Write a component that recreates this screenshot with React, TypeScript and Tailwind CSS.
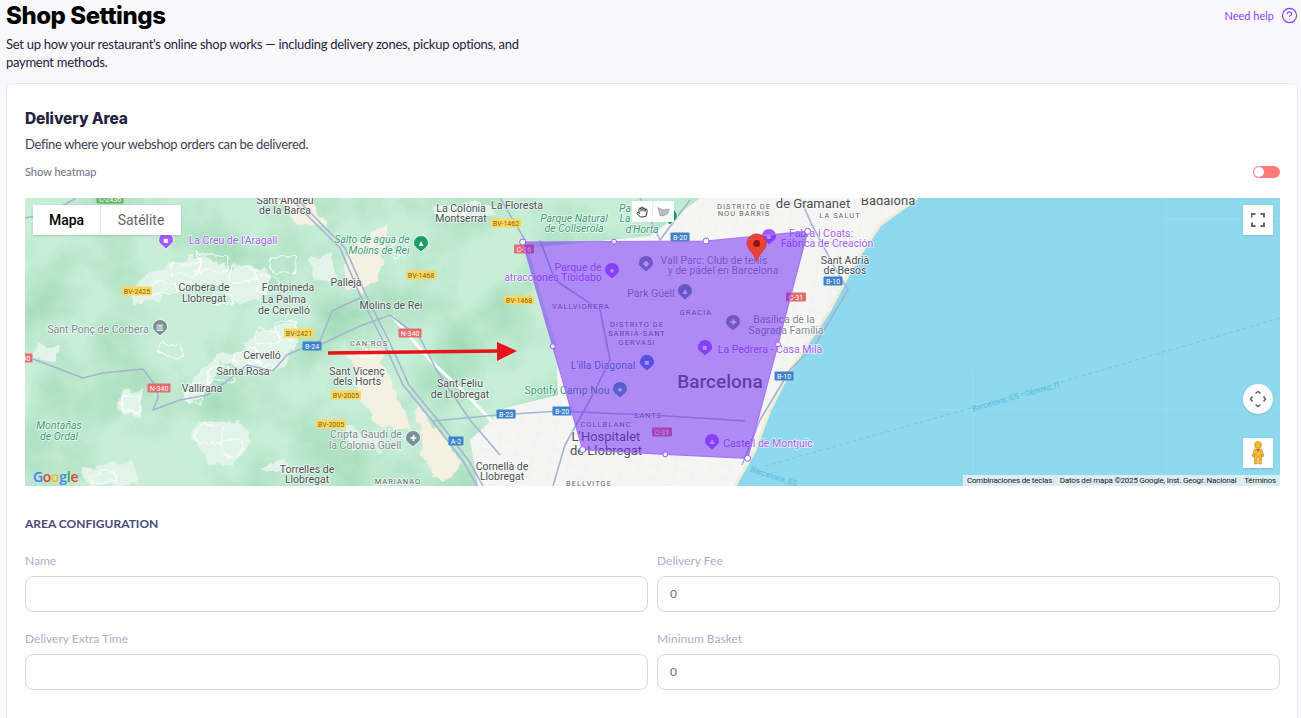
import { CircleHelp, Hand } from "lucide-react";

type L = [string, number, number];

const dark: L[] = [
  ["La Colònia", 461, 208], ["Montserrat", 461, 218], ["Sant Andreu", 285, 200], ["de la Barca", 285, 210],
  ["Corbera de", 204, 287], ["Llobregat", 204, 298], ["Fontpineda", 288, 287], ["La Palma", 284, 299],
  ["de Cervelló", 284, 310], ["Pallejà", 346, 282], ["Molins de Rei", 391, 305], ["Cervelló", 262, 355],
  ["Santa Rosa", 243, 371], ["Vallirana", 202, 388], ["Sant Vicenç", 357, 371], ["dels Horts", 357, 381],
  ["Sant Feliu", 460, 383], ["de Llobregat", 460, 394], ["Torrelles de", 307, 469], ["Llobregat", 307, 479],
  ["Cornellà de", 502, 466], ["Llobregat", 502, 476], ["La Floresta", 517, 205], ["Sant Adrià", 845, 260],
  ["de Besòs", 845, 270],
];
const small: L[] = [
  ["CAN ROS", 369, 343], ["MARIANAO", 398, 481], ["DISTRITO DE", 744, 206], ["NOU BARRIS", 744, 213],
  ["LA SALUT", 840, 215], ["VALLVIDRERA", 581, 306], ["GRACIA", 696, 312], ["DISTRITO DE", 637, 324],
  ["SARRIÀ-SANT", 637, 333], ["GERVASI", 637, 342], ["SANTS", 648, 415], ["COLLBLANC", 606, 424], ["BELLVITGE", 589, 483],
];
const grey: L[] = [
  ["Sant Ponç de Corbera", 98, 329], ["Cripta Gaudí de", 366, 434], ["la Colonia Güell", 365, 445],
  ["Park Güell", 651, 293], ["Vall Parc: Club de tenis", 714, 260], ["y de pádel en Barcelona", 723, 270],
  ["Basílica de la", 784, 319], ["Sagrada Família", 786, 330],
];
const purple: L[] = [
  ["La Creu de l'Aragall", 233, 240], ["Fabra i Coats:", 821, 233], ["Fábrica de Creación", 827, 243],
  ["Parque de", 578, 267], ["atracciones Tibidabo", 553, 277], ["La Pedrera - Casa Milà", 770, 349],
  ["Castell de Montjuïc", 768, 443],
];
const green: L[] = [
  ["Salto de agua de", 372, 239], ["Molins de Rei", 379, 250], ["Montañas", 59, 425], ["de Ordal", 59, 436],
  ["Parque Natural", 574, 218], ["de Collserola", 574, 228], ["d'Horta", 642, 229], ["Pa", 625, 208], ["La", 625, 218],
];
const shields: [string, number, number, string, number][] = [
  ["BV-2425", 137, 291, "#fcd75e", 30], ["BV-2421", 299, 333, "#fcd75e", 30], ["BV-1468", 421, 275, "#fcd75e", 30],
  ["BV-2005", 346, 395, "#fcd75e", 30], ["BV-2005", 331, 424, "#fcd75e", 30], ["BV-1462", 506, 223, "#fcd75e", 30],
  ["BV-1468", 519, 300, "#fcd75e", 30], ["C-2436", 110, 199, "#6bb36b", 27], ["N-340", 410, 333, "#e56b6f", 23],
  ["N-340", 159, 388, "#e56b6f", 23], ["N-340", 21, 358, "#e56b6f", 23], ["C-16", 524, 249, "#e56b6f", 20], ["C-31", 796, 297, "#e56b6f", 20],
  ["C-31", 662, 432, "#e56b6f", 20], ["B-24", 312, 346, "#3f82cc", 19], ["A-2", 456, 441, "#3f82cc", 15],
  ["B-20", 680, 237, "#3f82cc", 19], ["B-10", 833, 281, "#3f82cc", 19], ["B-10", 784, 376, "#3f82cc", 19],
  ["B-23", 506, 414, "#3f82cc", 19], ["B-20", 562, 411, "#3f82cc", 19],
];
const markers: [number, number, string, string][] = [
  [166, 240, "#a45cf7", "■"], [160, 327, "#7a8f98", "▥"], [421, 243, "#1e9c62", "▲"], [413, 438, "#7a8f98", "✚"],
  [670, 216, "#1e9c62", "▲"], [769, 236, "#a45cf7", "■"], [612, 270, "#a45cf7", "●"], [646, 263, "#7a8f98", "◆"],
  [685, 291, "#5f8f9f", "▲"], [733, 322, "#7a8f98", "✚"], [705, 347, "#a45cf7", "■"], [647, 362, "#3f82cc", "■"],
  [620, 389, "#4f9aa0", "●"], [712, 441, "#a45cf7", "▲"],
];
const villages = [
  "M170 262 L205 256 L232 272 L250 264 L272 277 L262 298 L240 305 L220 284 L190 286 L158 300 L135 303 L128 292 L150 274Z",
  "M262 330 L296 322 L300 338 L282 368 L262 374 L222 362 L205 398 L182 402 L186 386 L208 362 L240 348Z",
  "M195 422 L238 418 L255 440 L232 466 L208 462 L193 440Z",
  "M342 424 L378 437 L382 452 L352 450Z",
  "M262 466 L285 459 L298 470 L280 476Z",
  "M435 207 L478 200 L496 214 L468 222 L442 218Z",
  "M34 344 L58 347 L54 362 L36 358Z",
  "M122 390 L143 388 L139 416 L118 412Z",
  "M310 258 L332 252 L334 280 L314 282Z",
  "M82 470 L130 462 L140 484 L90 486Z",
];
const beige = [
  "M374 228 L390 224 L378 276 L360 292 L342 282 L348 250Z",
  "M350 354 L380 350 L396 395 L412 432 L380 424 L358 396Z",
  "M272 198 L312 198 L328 228 L300 224Z",
  "M414 404 L446 440 L462 466 L444 482 L424 464Z",
];
const loops: [number, number, number, number][] = [
  [172, 262, 26, 14], [198, 255, 30, 16], [232, 268, 24, 14], [150, 282, 26, 14], [258, 278, 22, 14],
  [215, 292, 18, 12], [272, 256, 24, 16], [255, 330, 24, 14], [278, 322, 18, 16], [232, 350, 26, 12],
  [208, 366, 22, 16], [188, 390, 18, 12], [250, 362, 22, 10], [198, 425, 24, 18], [222, 438, 20, 18],
  [440, 205, 24, 12], [360, 345, 14, 12], [122, 394, 16, 18], [90, 472, 28, 10], [395, 238, 12, 18], [160, 345, 24, 12],
];
const blueRoads = [
  "M33 359 L83 378 L103 373 L143 369 L157 388 L158 398 L153 410 L180 400 L207 395 L227 381 L247 365 L273 371 L287 355 L303 348 L320 341 L332 311 L360 298",
  "M320 345 L345 333 L360 326 L390 315 L420 338 L437 371 L470 420 L500 455",
  "M290 198 L340 248 L360 295 L383 341 L403 385 L430 418 L463 461 L477 486",
  "M296 198 L345 248 L366 295 L389 341 L409 385 L436 418 L469 461 L483 486",
  "M433 421 L497 415 L561 411 L600 413 L650 415 L700 418 L745 421",
  "M25 218 L52 212 L76 198",
  "M540 240 L555 280 L600 310 L610 360 L590 400 L565 445 L553 486",
  "M640 198 L660 240 L690 200",
  "M742 465 L760 420 L790 370 L815 345 L848 290 L836 270 L812 225 L800 198",
  "M500 198 L525 240",
];
const whiteRoads = ["M392 316 L430 360 L470 398 L500 430"];
const landEdge = "M25 198 L917 198 L880 225 L855 262 L830 310 L790 370 L770 410 L755 450 L735 486 L25 486Z";
const cityEdge = "M700 198 L917 198 L880 225 L855 262 L830 310 L790 370 L770 410 L755 450 L735 486 L478 486 L470 440 L505 408 L558 395 L556 345 L528 248 L650 236Z";
const streets = Array.from({ length: 28 }, (_, i) => i);

function Label({ t, x, y, fill, size = 10.5, ls, style, weight }: { t: string; x: number; y: number; fill: string; size?: number; ls?: number; style?: string; weight?: number }) {
  return (
    <text x={x} y={y + size * 0.36} textAnchor="middle" fill={fill} fontSize={size} letterSpacing={ls} fontStyle={style} fontWeight={weight} stroke="#ffffff" strokeOpacity={0.7} strokeWidth={1.6} paintOrder="stroke">
      {t}
    </text>
  );
}

function MapDrawing() {
  return (
    <svg viewBox="25 198 1255 288" className="block h-[288px] w-[1255px]" fontFamily="Roboto, sans-serif">
      <defs>
        <filter id="terrain" x="0" y="0" width="100%" height="100%" colorInterpolationFilters="sRGB">
          <feTurbulence type="fractalNoise" baseFrequency="0.014" numOctaves="5" seed="11" />
          <feColorMatrix values="0 0 0 0 0.64  0 0 0 0 0.86  0 0 0 0 0.72  2.2 0 0 0 -0.85" />
        </filter>
        <filter id="wig" x="-10%" y="-10%" width="120%" height="120%">
          <feTurbulence type="fractalNoise" baseFrequency="0.07" numOctaves="3" seed="4" />
          <feDisplacementMap in="SourceGraphic" scale="14" xChannelSelector="R" yChannelSelector="G" />
          <feGaussianBlur stdDeviation="0.5" />
        </filter>
        <clipPath id="land"><path d={landEdge} /></clipPath>
        <clipPath id="city"><path d={cityEdge} /></clipPath>
      </defs>
      <rect x="25" y="198" width="1255" height="288" fill="#c8eed8" />
      <g clipPath="url(#land)"><rect x="25" y="198" width="900" height="288" filter="url(#terrain)" /></g>
      <g fill="#f4f0e2" filter="url(#wig)">{beige.map((d, i) => <path key={i} d={d} />)}</g>
      <g filter="url(#wig)">
        <g fill="#e2f3ea">{villages.map((d, i) => <path key={i} d={d} />)}</g>
        <g fill="none" stroke="#ffffff" strokeWidth="1.2">{loops.map(([x, y, w, h], i) => <rect key={i} x={x} y={y} width={w} height={h} rx={3} />)}</g>
      </g>
      <g fill="none" stroke="#ffffff" strokeWidth="3">{whiteRoads.map((d, i) => <path key={i} d={d} />)}</g>
      <path d={cityEdge} fill="#f5f5f3" />
      <g clipPath="url(#city)" stroke="#eef0f2" strokeWidth="0.7">
        {streets.map((i) => <line key={`a${i}`} x1={470 + i * 18} y1={198} x2={420 + i * 18} y2={486} />)}
        {streets.map((i) => <line key={`b${i}`} x1={470} y1={200 + i * 13} x2={930} y2={280 + i * 13} />)}
      </g>
      <path d="M917 198 L880 225 L855 262 L830 310 L790 370 L770 410 L755 450 L735 486 L1280 486 L1280 198Z" fill="#8fd9ee" />
      <path d="M917 198 L880 225 L855 262 L830 310 L790 370 L770 410 L755 450 L735 486" fill="none" stroke="#f3ecd6" strokeWidth="3" />
      <g stroke="#a0e0f0" strokeWidth="0.7" fill="none">
        <path d="M770 410 H1280 M973 370 V475 M1166 198 V475 M1166 219 H1280" />
      </g>
      <path d="M765 466 L1000 400 L1280 318" fill="none" stroke="#60c4df" strokeWidth="0.7" strokeDasharray="4 3" />
      <text x="1017" y="399" textAnchor="middle" fill="#52bcd8" fontSize="8" transform="rotate(-16 1017 399)">Barcelona, ES - Génova, IT</text>
      <text x="773" y="479" textAnchor="middle" fill="#52bcd8" fontSize="8" transform="rotate(18 773 479)">Barcelona, ES</text>
      <g fill="none" stroke="#a4b4d2" strokeWidth="1.6" strokeLinejoin="round">{blueRoads.map((d, i) => <path key={i} d={d} />)}</g>
      {dark.map(([t, x, y], i) => <Label key={i} t={t} x={x} y={y} fill="#4a4f52" />)}
      {small.map(([t, x, y], i) => <Label key={i} t={t} x={x} y={y} fill="#5f6366" size={7.5} ls={1} />)}
      {grey.map(([t, x, y], i) => <Label key={i} t={t} x={x} y={y} fill="#7d8a90" />)}
      {purple.map(([t, x, y], i) => <Label key={i} t={t} x={x} y={y} fill="#a45cf7" />)}
      {green.map(([t, x, y], i) => <Label key={i} t={t} x={x} y={y} fill="#3a9a75" style="italic" />)}
      <Label t="L'illa Diagonal" x={603} y={365} fill="#3f82cc" />
      <Label t="Spotify Camp Nou" x={567} y={390} fill="#3a9a75" />
      <Label t="de Gramanet" x={813} y={203} fill="#4a4f52" size={13} />
      <Label t="Badalona" x={888} y={200} fill="#4a4f52" size={13} />
      <Label t="L'Hospitalet" x={606} y={436} fill="#4a4f52" size={13} />
      <Label t="de Llobregat" x={606} y={450} fill="#4a4f52" size={13} />
      <Label t="Barcelona" x={720} y={381} fill="#555a5e" size={19} weight={500} />
      {shields.map(([t, x, y, c, w], i) => (
        <g key={i}>
          <rect x={x - w / 2} y={y - 4.5} width={w} height={9} rx={1} fill={c} />
          <text x={x} y={y + 2.6} textAnchor="middle" fill={c === "#fcd75e" ? "#7a6420" : "#ffffff"} fontSize={7}>{t}</text>
        </g>
      ))}
      {markers.map(([x, y, c, g], i) => (
        <g key={i}>
          <path d={`M${x - 7.5} ${y} a7.5 7.5 0 1 1 15 0 c0 4 -5 6 -7.5 9 c-2.5 -3 -7.5 -5 -7.5 -9Z`} fill={c} stroke="#ffffff" strokeWidth="0.8" />
          <text x={x} y={y + 3} textAnchor="middle" fill="#ffffff" fontSize={8}>{g}</text>
        </g>
      ))}
      <path d="M328 353 L498 351" stroke="#e8141c" strokeWidth="3.5" fill="none" />
      <path d="M497 342 L517 351 L497 361Z" fill="#e8141c" />
      <path d="M522.7 242 L614 241.5 L706 241 L807.7 231.3 L778 344.3 L747.7 458.3 L665.3 454.3 L582.7 449.7 L552.7 346.3Z" fill="#6a20f8" fillOpacity="0.5" stroke="#a474fa" strokeWidth="1.2" />
      {[[522.7, 242, 3], [614, 241.7, 2.5], [706, 241, 3], [807.7, 231.3, 3], [778, 344.3, 2.5], [747.7, 458.3, 3], [665.3, 454.3, 2.5], [582.7, 449.7, 3], [552.7, 346.3, 2.5]].map(([x, y, r], i) => (
        <circle key={i} cx={x} cy={y} r={r} fill="#ffffff" fillOpacity={r === 3 ? 1 : 0.75} stroke="#9a5cf9" strokeWidth="1" />
      ))}
      <path d="M756.7 261.5 C753 252 747 249 747 243.5 a9.7 9.7 0 0 1 19.4 0 C766.4 249 760 252 756.7 261.5Z" fill="#ea4335" stroke="#c5221f" strokeWidth="0.5" />
      <circle cx="756.7" cy="243.5" r="3.5" fill="#8e1610" />
    </svg>
  );
}

function Field({ label, value = "" }: { label: string; value?: string }) {
  return (
    <div className="flex flex-col">
      <label className="mb-[8px] h-[15px] text-[12px] leading-[15px] text-[#aeacca]">{label}</label>
      <div className="flex h-[36px] items-center rounded-[8px] border border-[#d8d5ea] bg-white px-[12px] text-[12px] text-[#5d6b8c]">{value}</div>
    </div>
  );
}

export default function App() {
  return (
    <div className="h-[718px] w-[1301px] overflow-hidden bg-[#f9f9fb] font-['Lato',sans-serif]">
      <header className="relative pl-[6px]">
        <h1 className="h-[32px] font-['Inter',sans-serif] text-[24px] font-extrabold leading-[31px] tracking-[-0.45px] text-black">Shop Settings</h1>
        <p className="mt-[3px] w-[530px] text-[13px] leading-[18px] tracking-[-0.28px] text-[#23233b]">
          Set up how your restaurant's online shop works — including delivery zones, pickup options, and payment methods.
        </p>
        <a className="absolute right-[3px] top-[7px] flex items-center gap-[7px] text-[11px] leading-[16px] text-[#8b3dff]">
          Need help
          <CircleHelp size={17} strokeWidth={1.6} />
        </a>
      </header>
      <main className="ml-[6px] mr-[3px] mt-[12px] h-[700px] rounded-[8px] border border-[#e7e7ef] bg-white pl-[18px] pr-[17px] pt-[24px]">
        <h2 className="font-['Inter',sans-serif] text-[15.5px] font-extrabold leading-[22px] tracking-[-0.1px] text-[#25233f]">Delivery Area</h2>
        <p className="mt-[5px] text-[13px] leading-[18px] tracking-[-0.33px] text-[#3f3e58]">Define where your webshop orders can be delivered.</p>
        <div className="mt-[11px] flex h-[16px] items-center justify-between">
          <span className="text-[11px] text-[#6d6c85]">Show heatmap</span>
          <span className="flex h-[12px] w-[27px] items-center rounded-full bg-[#ff7b7b] pl-[1px]"><span className="size-[10px] rounded-full bg-white" /></span>
        </div>
        <div className="relative mt-[18px] h-[288px] w-[1255px] overflow-hidden">
          <MapDrawing />
          <div className="absolute left-[8px] top-[7px] flex h-[30px] w-[148px] bg-white font-['Roboto',sans-serif] text-[14px] shadow-sm">
            <span className="flex w-[68px] items-center justify-center border-r border-[#e6e6e6] font-medium text-black">Mapa</span>
            <span className="flex flex-1 items-center justify-center text-[#666666]">Satélite</span>
          </div>
          <div className="absolute left-[607px] top-[3px] flex h-[21px] w-[42px] bg-white">
            <span className="flex w-[21px] items-center justify-center border-r border-[#eeeeee] text-[#222222]"><Hand size={12} strokeWidth={1.8} /></span>
            <span className="flex flex-1 items-center justify-center">
              <svg width="13" height="12" viewBox="0 0 13 12"><path d="M1 1.5 L6 4 L12 3 L11 7.5 L6 10 L3 9.5Z" fill="#b9bfc4" stroke="#8a8a8a" strokeWidth="0.6" /></svg>
            </span>
          </div>
          <div className="absolute right-[7px] top-[7px] flex size-[30px] items-center justify-center bg-white shadow-sm">
            <svg width="14" height="14" viewBox="0 0 14 14" fill="none" stroke="#666666" strokeWidth="2"><path d="M0.5 4.5 V1 H4.5 M9.5 1 H13 V4.5 M13 9.5 V13 H9.5 M4.5 13 H1 V9.5" /></svg>
          </div>
          <div className="absolute right-[7px] top-[186px] flex size-[30px] items-center justify-center rounded-full bg-white shadow-sm">
            <svg width="18" height="18" viewBox="0 0 18 18" fill="none" stroke="#666666" strokeWidth="1.6"><path d="M6.5 3.5 L9 1.5 L11.5 3.5 M6.5 14.5 L9 16.5 L11.5 14.5 M3.5 6.5 L1.5 9 L3.5 11.5 M14.5 6.5 L16.5 9 L14.5 11.5" /></svg>
          </div>
          <div className="absolute right-[7px] top-[240px] flex size-[30px] items-center justify-center bg-white shadow-sm">
            <svg width="14" height="24" viewBox="0 0 14 24"><circle cx="7" cy="4" r="3.5" fill="#f5b82e" stroke="#b57f1c" strokeWidth="0.5" /><path d="M3.5 8 H10.5 L13 15 L11 16 L10.5 13 V23 H7.8 V16 H6.2 V23 H3.5 V13 L3 16 L1 15Z" fill="#f5b82e" stroke="#b57f1c" strokeWidth="0.5" /><path d="M5 8 L7 11 L9 8Z" fill="#e0622a" /></svg>
          </div>
          <div className="absolute bottom-[1px] left-[8px] font-['Open_Sans',sans-serif] text-[14px] font-semibold leading-[16px] tracking-[-0.3px]">
            <span className="text-[#4285f4]">G</span><span className="text-[#ea4335]">o</span><span className="text-[#fbbc05]">o</span><span className="text-[#4285f4]">g</span><span className="text-[#34a853]">l</span><span className="text-[#ea4335]">e</span>
          </div>
          <div className="absolute bottom-0 right-0 flex h-[11px] w-[317px] items-center justify-between whitespace-nowrap bg-[#daedf3] px-[4px] font-['Roboto',sans-serif] text-[8px] leading-[11px] tracking-[-0.2px] text-[#222222]">
            <span>Combinaciones de teclas</span>
            <span>Datos del mapa ©2025 Google, Inst. Geogr. Nacional</span>
            <span>Términos</span>
          </div>
        </div>
        <h3 className="mt-[30px] h-[16px] text-[12px] font-bold leading-[16px] text-[#4a4a78]">AREA CONFIGURATION</h3>
        <div className="mt-[21px] grid grid-cols-2 gap-x-[9px] gap-y-[19px]">
          <Field label="Name" />
          <Field label="Delivery Fee" value="0" />
          <Field label="Delivery Extra Time" />
          <Field label="Mininum Basket" value="0" />
        </div>
      </main>
    </div>
  );
}
